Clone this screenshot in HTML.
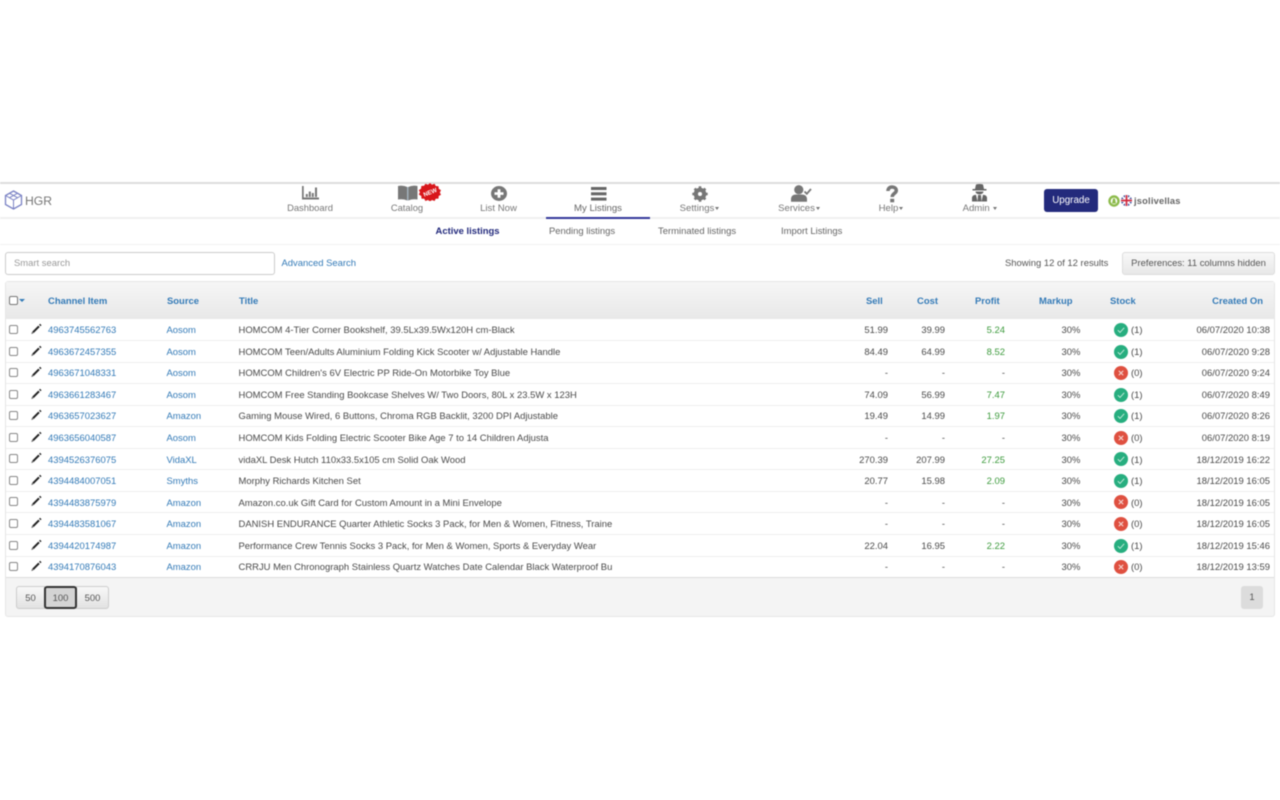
<!DOCTYPE html>
<html><head><meta charset="utf-8"><title>HGR</title>
<style>
html,body{margin:0;padding:0;background:#fff;width:1280px;height:800px;overflow:hidden}
body{font-family:"Liberation Sans",sans-serif;font-size:9.45px;color:#444;position:relative}
#w{position:absolute;left:0;top:0;width:1280px;height:800px;filter:blur(.42px)}
.a{position:absolute;white-space:nowrap}
.nav{position:absolute;top:202px;width:120px;text-align:center;color:#777;font-size:9.400px;line-height:12px}
.nav.w{font-size:9.600px;top:202.600px}
.car{display:inline-block;border-top:3px solid #777;border-left:2.500px solid transparent;border-right:2.500px solid transparent;vertical-align:middle;margin-left:1px}
.sub{position:absolute;top:226px;font-size:9.450px;line-height:12px;color:#666}
.th{position:absolute;top:295.500px;font-weight:bold;font-size:9.450px;line-height:12px;color:#337ab7;white-space:nowrap}
.row{position:absolute;left:6px;width:1268px;height:21.550px;border-bottom:1px solid #eee;box-sizing:border-box;font-size:9.450px;color:#4a4a4a}
.row span{position:absolute;top:5.800px;line-height:12px;white-space:nowrap}
.row .l{color:#337ab7}
.row .cb{position:absolute;left:3px;top:5.500px;width:7px;height:7px;border:1px solid #888;border-radius:2px;background:#fff}
.row svg{position:absolute}
.g{color:#3c9a3c}
.btn{position:absolute;top:586px;height:23px;box-sizing:border-box;border:1px solid #ccc;background:linear-gradient(#f8f8f8,#e2e2e2);text-align:center;line-height:23px;color:#555;font-size:9.450px}
</style></head><body><div id="w">
<div class="a" style="left:0;top:182px;width:1280px;height:2px;background:#ddd"></div>
<div class="a" style="left:0;top:217px;width:1280px;height:2px;background:#f0f0f0"></div>
<div class="a" style="left:0;top:244px;width:1280px;height:1px;background:#f1f1f1"></div>
<svg class="a" style="left:4px;top:190px" width="19" height="20" viewBox="0 0 19 20" fill="none" stroke="#7a82c4" stroke-width="1.300"><path d="M9.500 1 17.500 5.500V14.500L9.500 19 1.500 14.500V5.500Z"/><path d="M1.500 5.500 9.500 10 17.500 5.500M9.500 10V19M5.500 3.300 13.500 7.700M13.500 3.300 5.500 7.700" stroke-width="1"/></svg>
<div class="a" style="left:25px;top:192.500px;font-size:12.200px;line-height:16px;color:#777">HGR</div>
<svg class="a" style="left:301.500px;top:186px" width="17" height="14" viewBox="0 0 17 14" fill="#777"><path d="M0 0h1.700v11.500H17V13.500H0z"/><rect x="3.800" y="8" width="2" height="3"/><rect x="6.800" y="5.500" width="2" height="5.500"/><rect x="9.800" y="7" width="2" height="4"/><rect x="13" y="1.500" width="2" height="9.500"/></svg>
<div class="nav" style="left:250px">Dashboard</div>
<svg class="a" style="left:398px;top:185px" width="20" height="16" viewBox="0 0 20 16"><path fill="#777" d="M0 1Q5 0 9.300 2V15.500Q5 13.800 0 14.500zM10.200 2Q14.500 0 19.500 1V14.500Q14.500 13.800 10.200 15.500z"/><rect x="9.300" y="2" width=".9" height="13.500" fill="#9db4c4"/></svg>
<svg class="a" style="left:418px;top:182.500px" width="24" height="18" viewBox="0 0 24 18"><path fill="#d8161b" d="M12 0l2 1.700 2.600-1 1.100 2.300 2.800.2.200 2.600 2.300 1.500-1.200 2.200 1.200 2.300-2.300 1.200-.2 2.600-2.800.2-1.100 2.200-2.600-1-2 1.500-2-1.500-2.600 1-1.100-2.200-2.800-.2-.2-2.600L.8 11.500 2 9.300.8 7.100l2.300-1.500.2-2.600 2.800-.2L7.400.7l2.600 1z"/><text x="12" y="11.300" font-family="Liberation Sans,sans-serif" font-size="6" font-weight="bold" fill="#fff" text-anchor="middle" transform="rotate(-22 12 9)">NEW</text></svg>
<div class="nav" style="left:347px">Catalog</div>
<svg class="a" style="left:491px;top:186px" width="16" height="15" viewBox="0 0 16 16" preserveAspectRatio="none"><circle cx="8" cy="8" r="8" fill="#777"/><path d="M8 3.500v9M3.500 8h9" stroke="#fff" stroke-width="2.800"/></svg>
<div class="nav w" style="left:438.500px">List Now</div>
<svg class="a" style="left:590.500px;top:186.500px" width="16" height="14" viewBox="0 0 16 14" fill="#666"><rect x="0" y="0" width="15.500" height="3"/><rect x="0" y="5.300" width="15.500" height="3"/><rect x="0" y="10.600" width="15.500" height="3"/></svg>
<div class="nav w" style="left:538px;color:#666">My Listings</div>
<div class="a" style="left:546px;top:217px;width:104px;height:1.500px;background:#33389a"></div>
<svg class="a" style="left:692px;top:185.500px" width="16" height="16" viewBox="0 0 16 16"><circle cx="8" cy="8" r="4.300" fill="none" stroke="#777" stroke-width="4"/><path d="M8 .300v15.400M.300 8h15.400M2.600 2.600l10.800 10.800M13.400 2.600 2.600 13.400" stroke="#777" stroke-width="2.600"/><circle cx="8" cy="8" r="2" fill="#fff"/></svg>
<div class="nav w" style="left:639.500px">Settings<i class="car"></i></div>
<svg class="a" style="left:791px;top:185px" width="21" height="17" viewBox="0 0 21 17" fill="#777"><circle cx="7.800" cy="4.700" r="4.600"/><path d="M0 16.700v-3Q.5 9.500 5 9.500h5.500q5 0 5.500 4.200v3z"/><path d="M13.500 6.500l2.300 2.300 4.200-4.800" fill="none" stroke="#777" stroke-width="1.800"/></svg>
<div class="nav w" style="left:739px">Services<i class="car"></i></div>
<svg class="a" style="left:886px;top:184.500px" width="12" height="18" viewBox="0 0 12 18" fill="none"><path d="M2 6C2 3.300 3.700 2 6 2S10.300 3.300 10.300 5.500C10.300 8.500 6.200 8.300 6.200 12" stroke="#777" stroke-width="3.500"/><rect x="4.200" y="13.800" width="4" height="3.500" fill="#777"/></svg>
<div class="nav w" style="left:831px">Help<i class="car"></i></div>
<svg class="a" style="left:972px;top:184px" width="15" height="18" viewBox="0 0 15 18" fill="#666"><path d="M4 0.500Q7.500 -.5 11 .5L12 5H3z"/><rect x="0.500" y="5" width="14" height="1.500"/><path d="M3.500 7.500h8Q11.500 10 7.500 10.500 3.500 10 3.500 7.500z"/><path d="M0 17.500v-4Q.5 11 4 10.800L5.500 17.500zM15 17.500v-4Q14.500 11 11 10.800L9.500 17.500z"/><path d="M6 11h3l.5 6.500h-4z"/></svg>
<div class="nav w" style="left:920px">Admin <i class="car"></i></div>
<div class="a" style="left:1044px;top:189px;width:54px;height:23px;box-sizing:border-box;background:#232a7c;border-radius:3px;color:#fff;text-align:center;line-height:23px;font-size:9.800px">Upgrade</div>
<svg class="a" style="left:1107.500px;top:195px" width="12" height="12" viewBox="0 0 12 12"><circle cx="6" cy="6" r="4.500" fill="#fff" stroke="#8dbb4c" stroke-width="2.400"/><path d="M4 8.500h4L7 3.500H5z" fill="#8dbb4c"/></svg>
<svg class="a" style="left:1121px;top:195px" width="11" height="11" viewBox="0 0 11 11"><defs><clipPath id="fc"><circle cx="5.500" cy="5.500" r="5.500"/></clipPath></defs><g clip-path="url(#fc)"><rect width="11" height="11" fill="#2b3d8f"/><path d="M0 0 11 11M11 0 0 11" stroke="#fff" stroke-width="1.800"/><path d="M5.500 0v11M0 5.500h11" stroke="#fff" stroke-width="3"/><path d="M5.500 0v11M0 5.500h11" stroke="#d0283c" stroke-width="1.700"/></g></svg>
<div class="a" style="left:1134px;top:195px;font-size:9.300px;line-height:12px;font-weight:bold;color:#666;letter-spacing:.2px">jsolivellas</div>
<div class="sub" style="left:435.500px;font-weight:bold;color:#22297c">Active listings</div>
<div class="sub" style="left:549px">Pending listings</div>
<div class="sub" style="left:658px">Terminated listings</div>
<div class="sub" style="left:781px">Import Listings</div>
<div class="a" style="left:5px;top:252px;width:270px;height:23px;box-sizing:border-box;border:1px solid #ccc;border-radius:3px;padding-left:8px;line-height:22px;color:#999">Smart search</div>
<div class="a" style="left:281.500px;top:258px;line-height:12px;color:#337ab7">Advanced Search</div>
<div class="a" style="left:1005px;top:258px;line-height:12px;color:#555">Showing 12 of 12 results</div>
<div class="a" style="left:1122px;top:252px;width:153px;height:23px;box-sizing:border-box;border:1px solid #ddd;border-radius:3px;background:linear-gradient(#f8f8f8,#e8e8e8);text-align:center;line-height:22px;color:#555">Preferences: 11 columns hidden</div>
<div class="a" style="left:5px;top:281px;width:1270px;height:336px;box-sizing:border-box;border:1px solid #e6e6e6;border-radius:3px;background:#f4f4f4"></div>
<div class="a" style="left:6px;top:282px;width:1268px;height:37px;background:linear-gradient(#f6f6f6,#e8e8e8)"></div>
<div class="a" style="left:6px;top:319px;width:1268px;height:259px;background:#fff"></div>
<div class="a" style="left:9px;top:296px;width:7px;height:7px;border:1px solid #777;border-radius:2px;background:#fff"></div>
<div class="a" style="left:19px;top:299px;border-top:3px solid #337ab7;border-left:3px solid transparent;border-right:3px solid transparent"></div>
<div class="th" style="left:48px">Channel Item</div>
<div class="th" style="left:167px">Source</div>
<div class="th" style="left:239px">Title</div>
<div class="th" style="left:866px">Sell</div>
<div class="th" style="left:917px">Cost</div>
<div class="th" style="left:975px">Profit</div>
<div class="th" style="left:1039px">Markup</div>
<div class="th" style="left:1110px">Stock</div>
<div class="th" style="right:17px">Created On</div>
<svg width="0" height="0" style="position:absolute"><defs>
<symbol id="p" viewBox="0 0 12 12"><path d="M1.300 11 2.100 8.800 3.500 10.200z" fill="#555"/><path d="M3 9.300 9 3.300" stroke="#222" stroke-width="2" fill="none"/><path d="M9.800 2.500 10.800 1.500" stroke="#222" stroke-width="2" fill="none"/></symbol>
<symbol id="ok" viewBox="0 0 14 14"><circle cx="7" cy="7" r="7" fill="#27ae7f"/><path d="M3.800 7.200l2.200 2.200 4.200-4.600" fill="none" stroke="#bfe8d8" stroke-width="1"/></symbol>
<symbol id="no" viewBox="0 0 14 14"><circle cx="7" cy="7" r="7" fill="#df5040"/><path d="M4.800 4.800l4.400 4.400M9.200 4.800 4.800 9.200" fill="none" stroke="#f3cfca" stroke-width="1.100"/></symbol>
</defs></svg>
<div class="row" style="top:319.500px"><i class="cb"></i><svg style="left:23.500px;top:3.500px" width="12" height="12"><use href="#p"/></svg><span class="l" style="left:42px">4963745562763</span><span class="l" style="left:160.500px">Aosom</span><span style="left:232.500px">HOMCOM 4-Tier Corner Bookshelf, 39.5Lx39.5Wx120H cm-Black</span><span style="right:386px">51.99</span><span style="right:329px">39.99</span><span class="g" style="right:269px">5.24</span><span style="left:1055.500px">30%</span><svg style="left:1108px;top:3.500px" width="14" height="14"><use href="#ok"/></svg><span style="left:1125px">(1)</span><span style="right:4px">06/07/2020 10:38</span></div>
<div class="row" style="top:341px"><i class="cb"></i><svg style="left:23.500px;top:3.500px" width="12" height="12"><use href="#p"/></svg><span class="l" style="left:42px">4963672457355</span><span class="l" style="left:160.500px">Aosom</span><span style="left:232.500px">HOMCOM Teen/Adults Aluminium Folding Kick Scooter w/ Adjustable Handle</span><span style="right:386px">84.49</span><span style="right:329px">64.99</span><span class="g" style="right:269px">8.52</span><span style="left:1055.500px">30%</span><svg style="left:1108px;top:3.500px" width="14" height="14"><use href="#ok"/></svg><span style="left:1125px">(1)</span><span style="right:4px">06/07/2020 9:28</span></div>
<div class="row" style="top:362.600px"><i class="cb"></i><svg style="left:23.500px;top:3.500px" width="12" height="12"><use href="#p"/></svg><span class="l" style="left:42px">4963671048331</span><span class="l" style="left:160.500px">Aosom</span><span style="left:232.500px">HOMCOM Children's 6V Electric PP Ride-On Motorbike Toy Blue</span><span style="right:386px">-</span><span style="right:329px">-</span><span style="right:269px">-</span><span style="left:1055.500px">30%</span><svg style="left:1108px;top:3.500px" width="14" height="14"><use href="#no"/></svg><span style="left:1125px">(0)</span><span style="right:4px">06/07/2020 9:24</span></div>
<div class="row" style="top:384.100px"><i class="cb"></i><svg style="left:23.500px;top:3.500px" width="12" height="12"><use href="#p"/></svg><span class="l" style="left:42px">4963661283467</span><span class="l" style="left:160.500px">Aosom</span><span style="left:232.500px">HOMCOM Free Standing Bookcase Shelves W/ Two Doors, 80L x 23.5W x 123H</span><span style="right:386px">74.09</span><span style="right:329px">56.99</span><span class="g" style="right:269px">7.47</span><span style="left:1055.500px">30%</span><svg style="left:1108px;top:3.500px" width="14" height="14"><use href="#ok"/></svg><span style="left:1125px">(1)</span><span style="right:4px">06/07/2020 8:49</span></div>
<div class="row" style="top:405.700px"><i class="cb"></i><svg style="left:23.500px;top:3.500px" width="12" height="12"><use href="#p"/></svg><span class="l" style="left:42px">4963657023627</span><span class="l" style="left:160.500px">Amazon</span><span style="left:232.500px">Gaming Mouse Wired, 6 Buttons, Chroma RGB Backlit, 3200 DPI Adjustable</span><span style="right:386px">19.49</span><span style="right:329px">14.99</span><span class="g" style="right:269px">1.97</span><span style="left:1055.500px">30%</span><svg style="left:1108px;top:3.500px" width="14" height="14"><use href="#ok"/></svg><span style="left:1125px">(1)</span><span style="right:4px">06/07/2020 8:26</span></div>
<div class="row" style="top:427.200px"><i class="cb"></i><svg style="left:23.500px;top:3.500px" width="12" height="12"><use href="#p"/></svg><span class="l" style="left:42px">4963656040587</span><span class="l" style="left:160.500px">Aosom</span><span style="left:232.500px">HOMCOM Kids Folding Electric Scooter Bike Age 7 to 14 Children Adjusta</span><span style="right:386px">-</span><span style="right:329px">-</span><span style="right:269px">-</span><span style="left:1055.500px">30%</span><svg style="left:1108px;top:3.500px" width="14" height="14"><use href="#no"/></svg><span style="left:1125px">(0)</span><span style="right:4px">06/07/2020 8:19</span></div>
<div class="row" style="top:448.800px"><i class="cb"></i><svg style="left:23.500px;top:3.500px" width="12" height="12"><use href="#p"/></svg><span class="l" style="left:42px">4394526376075</span><span class="l" style="left:160.500px">VidaXL</span><span style="left:232.500px">vidaXL Desk Hutch 110x33.5x105 cm Solid Oak Wood</span><span style="right:386px">270.39</span><span style="right:329px">207.99</span><span class="g" style="right:269px">27.25</span><span style="left:1055.500px">30%</span><svg style="left:1108px;top:3.500px" width="14" height="14"><use href="#ok"/></svg><span style="left:1125px">(1)</span><span style="right:4px">18/12/2019 16:22</span></div>
<div class="row" style="top:470.400px"><i class="cb"></i><svg style="left:23.500px;top:3.500px" width="12" height="12"><use href="#p"/></svg><span class="l" style="left:42px">4394484007051</span><span class="l" style="left:160.500px">Smyths</span><span style="left:232.500px">Morphy Richards Kitchen Set</span><span style="right:386px">20.77</span><span style="right:329px">15.98</span><span class="g" style="right:269px">2.09</span><span style="left:1055.500px">30%</span><svg style="left:1108px;top:3.500px" width="14" height="14"><use href="#ok"/></svg><span style="left:1125px">(1)</span><span style="right:4px">18/12/2019 16:05</span></div>
<div class="row" style="top:491.900px"><i class="cb"></i><svg style="left:23.500px;top:3.500px" width="12" height="12"><use href="#p"/></svg><span class="l" style="left:42px">4394483875979</span><span class="l" style="left:160.500px">Amazon</span><span style="left:232.500px">Amazon.co.uk Gift Card for Custom Amount in a Mini Envelope</span><span style="right:386px">-</span><span style="right:329px">-</span><span style="right:269px">-</span><span style="left:1055.500px">30%</span><svg style="left:1108px;top:3.500px" width="14" height="14"><use href="#no"/></svg><span style="left:1125px">(0)</span><span style="right:4px">18/12/2019 16:05</span></div>
<div class="row" style="top:513.500px"><i class="cb"></i><svg style="left:23.500px;top:3.500px" width="12" height="12"><use href="#p"/></svg><span class="l" style="left:42px">4394483581067</span><span class="l" style="left:160.500px">Amazon</span><span style="left:232.500px">DANISH ENDURANCE Quarter Athletic Socks 3 Pack, for Men &amp; Women, Fitness, Traine</span><span style="right:386px">-</span><span style="right:329px">-</span><span style="right:269px">-</span><span style="left:1055.500px">30%</span><svg style="left:1108px;top:3.500px" width="14" height="14"><use href="#no"/></svg><span style="left:1125px">(0)</span><span style="right:4px">18/12/2019 16:05</span></div>
<div class="row" style="top:535px"><i class="cb"></i><svg style="left:23.500px;top:3.500px" width="12" height="12"><use href="#p"/></svg><span class="l" style="left:42px">4394420174987</span><span class="l" style="left:160.500px">Amazon</span><span style="left:232.500px">Performance Crew Tennis Socks 3 Pack, for Men &amp; Women, Sports &amp; Everyday Wear</span><span style="right:386px">22.04</span><span style="right:329px">16.95</span><span class="g" style="right:269px">2.22</span><span style="left:1055.500px">30%</span><svg style="left:1108px;top:3.500px" width="14" height="14"><use href="#ok"/></svg><span style="left:1125px">(1)</span><span style="right:4px">18/12/2019 15:46</span></div>
<div class="row" style="top:556.600px;border-bottom:1px solid #ddd"><i class="cb"></i><svg style="left:23.500px;top:3.500px" width="12" height="12"><use href="#p"/></svg><span class="l" style="left:42px">4394170876043</span><span class="l" style="left:160.500px">Amazon</span><span style="left:232.500px">CRRJU Men Chronograph Stainless Quartz Watches Date Calendar Black Waterproof Bu</span><span style="right:386px">-</span><span style="right:329px">-</span><span style="right:269px">-</span><span style="left:1055.500px">30%</span><svg style="left:1108px;top:3.500px" width="14" height="14"><use href="#no"/></svg><span style="left:1125px">(0)</span><span style="right:4px">18/12/2019 13:59</span></div>
<div class="btn" style="left:16px;width:29px;border-radius:3px 0 0 3px">50</div>
<div class="btn" style="left:76px;width:33px;border-radius:0 3px 3px 0">500</div>
<div class="btn" style="left:44px;width:33px;border:2px solid #333;border-radius:3px;background:#d4d4d4;line-height:21px">100</div>
<div class="a" style="left:1241px;top:586px;width:22px;height:23px;border-radius:3px;background:#dcdcdc;text-align:center;line-height:24px;color:#555">1</div>
</div></body></html>
